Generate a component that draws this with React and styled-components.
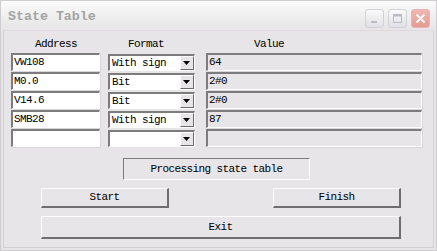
import React from 'react';
import styled, { createGlobalStyle } from 'styled-components';

// Styles
//----------------------------------------------------------------------------------//

const GlobalStyle = createGlobalStyle`
    html, body {
        margin: 0;
        padding: 0;
        background: #e7e5e7;
    }
    * {
        box-sizing: border-box;
    }
`;

const Window = styled.div`
    width: 437px;
    height: 251px;
    display: flex;
    flex-direction: column;
    background: #e7e5e7;
    border: 1px solid #cfcdcf;
    font-family: 'Liberation Mono', 'DejaVu Sans Mono', monospace;
    overflow: hidden;
`;

const TitleBar = styled.div`
    height: 28px;
    display: flex;
    align-items: center;
    justify-content: space-between;
    padding: 0 6px 0 7px;
    background: linear-gradient(#fbfbfb, #eeeeee 60%, #e6e6e6);
    flex-shrink: 0;
`;

const Title = styled.span`
    font-size: 13.3px;
    font-weight: bold;
    color: #a4a4a4;
    margin-top: 2px;
`;

const Controls = styled.div`
    display: flex;
    gap: 4px;
    margin-top: 6px;
`;

const CaptionButton = styled.div`
    width: 19px;
    height: 19px;
    border-radius: 3px;
    border: 1px solid ${p => p.close ? '#e6b4b4' : '#d0d0d6'};
    background: ${p => p.close
        ? 'linear-gradient(#f1b7b1, #e49a92)'
        : 'linear-gradient(#fafafa, #e0e0e6)'};
    display: flex;
    align-items: center;
    justify-content: center;
`;

const Client = styled.div`
    flex: 1;
    margin: 1px 2px 2px 2px;
    border: 1px solid #d2d0d2;
    border-top-color: #dcdadc;
    display: flex;
    flex-direction: column;
    padding: 5px 0 0 7px;
`;

const Table = styled.div`
    display: grid;
    grid-template-columns: 89px 87px 219px;
    column-gap: 8px;
    row-gap: 1px;
    align-items: start;
`;

const Header = styled.div`
    font-size: 11px;
    letter-spacing: -0.6px;
    color: #000;
    height: 16px;
    line-height: 16px;
    padding-left: ${p => p.pad}px;
    white-space: nowrap;
`;

const Field = styled.div`
    height: 18px;
    background: ${p => p.readonly ? '#e7e5e7' : '#ffffff'};
    border-top: 2px solid #7c7c7c;
    border-left: 2px solid #7c7c7c;
    border-right: 1px solid #ffffff;
    border-bottom: 1px solid #ffffff;
    box-shadow: 1px 1px 0 #d8d6d8;
    font-size: 11px;
    letter-spacing: -0.6px;
    line-height: 14px;
    padding-left: 1px;
    color: #000;
    white-space: nowrap;
    margin-left: ${p => p.shift || 0}px;
`;

const Select = styled.div`
    height: 17px;
    margin-top: 1px;
    display: flex;
    background: #ffffff;
    border-top: 2px solid #7c7c7c;
    border-left: 2px solid #7c7c7c;
    border-right: 1px solid #ffffff;
    border-bottom: 1px solid #ffffff;
`;

const SelectText = styled.div`
    flex: 1;
    font-size: 11px;
    letter-spacing: -0.6px;
    line-height: 15px;
    padding-left: 2px;
    white-space: nowrap;
`;

const Arrow = styled.div`
    width: 14px;
    height: 100%;
    background: #e7e5e7;
    border-top: 1px solid #ffffff;
    border-left: 1px solid #ffffff;
    border-right: 1px solid #6c6c6c;
    border-bottom: 1px solid #6c6c6c;
    display: flex;
    align-items: center;
    justify-content: center;
`;

const Status = styled.div`
    align-self: center;
    margin: 11px 0 0 -11px;
    width: 187px;
    height: 22px;
    border-top: 1px solid #7c7c7c;
    border-left: 1px solid #7c7c7c;
    border-right: 1px solid #ffffff;
    border-bottom: 1px solid #ffffff;
    font-size: 11px;
    letter-spacing: -0.6px;
    text-align: center;
    line-height: 20px;
`;

const ButtonRow = styled.div`
    display: flex;
    justify-content: space-between;
    width: 360px;
    margin: ${p => p.top}px 0 0 30px;
`;

const Button = styled.div`
    width: ${p => p.wide ? '360px' : '128px'};
    height: ${p => p.wide ? '23px' : '20px'};
    background: #e7e5e7;
    border-top: 1px solid #ffffff;
    border-left: 1px solid #ffffff;
    border-right: 2px solid #6e6e6e;
    border-bottom: 2px solid #6e6e6e;
    font-size: 11px;
    letter-spacing: -0.6px;
    text-align: center;
    line-height: ${p => p.wide ? '20px' : '17px'};
    color: #000;
`;

//----------------------------------------------------------------------------------//

const rows = [
    { address: 'VW108', format: 'With sign', value: '64' },
    { address: 'M0.0', format: 'Bit', value: '2#0' },
    { address: 'V14.6', format: 'Bit', value: '2#0' },
    { address: 'SMB28', format: 'With sign', value: '87' },
    { address: '', format: '', value: '' },
];

const DownArrow = () => (
    <svg width="8" height="5" viewBox="0 0 8 5">
        <path d="M0 0 H7 L3.5 4 Z" fill="#000" />
    </svg>
);

const App = () => {
    return (
        <>
            <GlobalStyle />
            <Window>
                <TitleBar>
                    <Title>State Table</Title>
                    <Controls>
                        <CaptionButton>
                            <svg width="11" height="11" viewBox="0 0 11 11">
                                <rect x="2" y="8" width="6" height="2" fill="#bcbcc4" />
                            </svg>
                        </CaptionButton>
                        <CaptionButton>
                            <svg width="11" height="11" viewBox="0 0 11 11">
                                <rect x="1.5" y="1.5" width="8" height="8" fill="none" stroke="#bcbcc4" />
                                <rect x="1.5" y="1.5" width="8" height="2" fill="#bcbcc4" />
                            </svg>
                        </CaptionButton>
                        <CaptionButton close>
                            <svg width="11" height="11" viewBox="0 0 11 11">
                                <path d="M1.5 1.5 L9.5 9.5 M9.5 1.5 L1.5 9.5" stroke="#ffffff" strokeWidth="1.8" />
                            </svg>
                        </CaptionButton>
                    </Controls>
                </TitleBar>
                <Client>
                    <Table>
                        <Header pad={24}>Address</Header>
                        <Header pad={20}>Format</Header>
                        <Header pad={51}>Value</Header>
                        {rows.map((r, i) => (
                            <React.Fragment key={i}>
                                <Field>{r.address}</Field>
                                <Select>
                                    <SelectText>{r.format}</SelectText>
                                    <Arrow><DownArrow /></Arrow>
                                </Select>
                                <Field readonly shift={3}>{r.value}</Field>
                            </React.Fragment>
                        ))}
                    </Table>
                    <Status>Processing state table</Status>
                    <ButtonRow top={8}>
                        <Button>Start</Button>
                        <Button>Finish</Button>
                    </ButtonRow>
                    <ButtonRow top={8}>
                        <Button wide>Exit</Button>
                    </ButtonRow>
                </Client>
            </Window>
        </>
    );
};

export default App;
